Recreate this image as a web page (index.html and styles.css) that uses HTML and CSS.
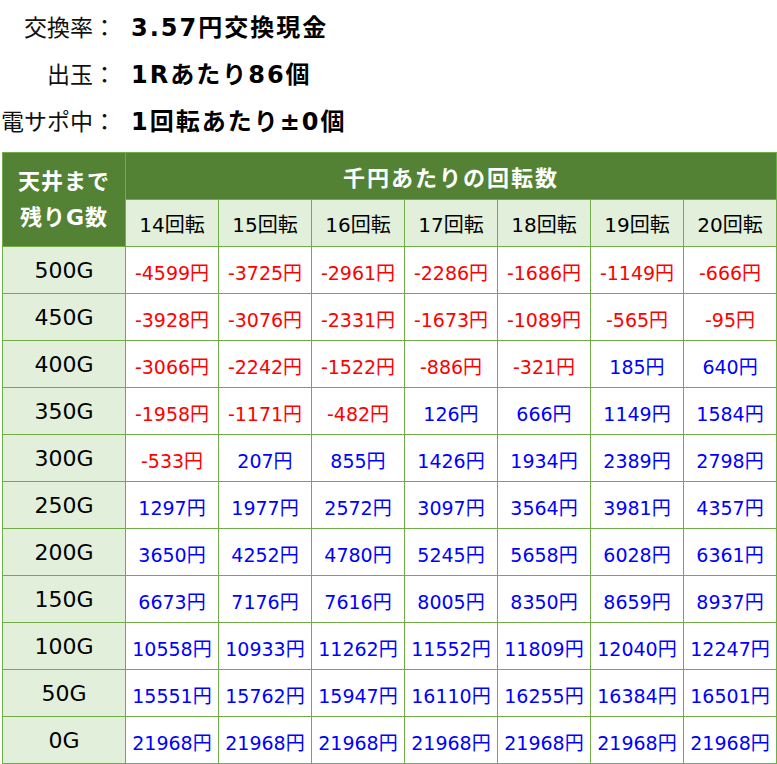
FILE: index.html
```html
<!DOCTYPE html>
<html lang="ja">
<head>
<meta charset="utf-8">
<title>天井まで残りG数</title>
<link rel="stylesheet" href="styles.css">
</head>
<body>
<div class="info">
  <div class="label">交換率：</div><div class="value">3.57円交換現金</div>
  <div class="label">出玉：</div><div class="value">1Rあたり86個</div>
  <div class="label">電サポ中：</div><div class="value">1回転あたり±0個</div>
</div>
<table class="tbl">
  <colgroup>
    <col class="c-first">
    <col class="c-n"><col class="c-n"><col class="c-n"><col class="c-n"><col class="c-n"><col class="c-n"><col class="c-n">
  </colgroup>
  <thead>
    <tr>
      <th class="head-dark corner" rowspan="2">天井まで<br>残りG数</th>
      <th class="head-dark group" colspan="7">千円あたりの回転数</th>
    </tr>
    <tr>
      <th class="head-light">14回転</th>
      <th class="head-light">15回転</th>
      <th class="head-light">16回転</th>
      <th class="head-light">17回転</th>
      <th class="head-light">18回転</th>
      <th class="head-light">19回転</th>
      <th class="head-light">20回転</th>
    </tr>
  </thead>
  <tbody>
    <tr><th class="rowh">500G</th><td class="neg">-4599円</td><td class="neg">-3725円</td><td class="neg">-2961円</td><td class="neg">-2286円</td><td class="neg">-1686円</td><td class="neg">-1149円</td><td class="neg">-666円</td></tr>
    <tr><th class="rowh">450G</th><td class="neg">-3928円</td><td class="neg">-3076円</td><td class="neg">-2331円</td><td class="neg">-1673円</td><td class="neg">-1089円</td><td class="neg">-565円</td><td class="neg">-95円</td></tr>
    <tr><th class="rowh">400G</th><td class="neg">-3066円</td><td class="neg">-2242円</td><td class="neg">-1522円</td><td class="neg">-886円</td><td class="neg">-321円</td><td class="pos">185円</td><td class="pos">640円</td></tr>
    <tr><th class="rowh">350G</th><td class="neg">-1958円</td><td class="neg">-1171円</td><td class="neg">-482円</td><td class="pos">126円</td><td class="pos">666円</td><td class="pos">1149円</td><td class="pos">1584円</td></tr>
    <tr><th class="rowh">300G</th><td class="neg">-533円</td><td class="pos">207円</td><td class="pos">855円</td><td class="pos">1426円</td><td class="pos">1934円</td><td class="pos">2389円</td><td class="pos">2798円</td></tr>
    <tr><th class="rowh">250G</th><td class="pos">1297円</td><td class="pos">1977円</td><td class="pos">2572円</td><td class="pos">3097円</td><td class="pos">3564円</td><td class="pos">3981円</td><td class="pos">4357円</td></tr>
    <tr><th class="rowh">200G</th><td class="pos">3650円</td><td class="pos">4252円</td><td class="pos">4780円</td><td class="pos">5245円</td><td class="pos">5658円</td><td class="pos">6028円</td><td class="pos">6361円</td></tr>
    <tr><th class="rowh">150G</th><td class="pos">6673円</td><td class="pos">7176円</td><td class="pos">7616円</td><td class="pos">8005円</td><td class="pos">8350円</td><td class="pos">8659円</td><td class="pos">8937円</td></tr>
    <tr><th class="rowh">100G</th><td class="pos">10558円</td><td class="pos">10933円</td><td class="pos">11262円</td><td class="pos">11552円</td><td class="pos">11809円</td><td class="pos">12040円</td><td class="pos">12247円</td></tr>
    <tr><th class="rowh">50G</th><td class="pos">15551円</td><td class="pos">15762円</td><td class="pos">15947円</td><td class="pos">16110円</td><td class="pos">16255円</td><td class="pos">16384円</td><td class="pos">16501円</td></tr>
    <tr><th class="rowh">0G</th><td class="pos">21968円</td><td class="pos">21968円</td><td class="pos">21968円</td><td class="pos">21968円</td><td class="pos">21968円</td><td class="pos">21968円</td><td class="pos">21968円</td></tr>
  </tbody>
</table>
</body>
</html>
```
FILE: styles.css
```css
html, body {
  margin: 0;
  padding: 0;
  background: #ffffff;
}
body {
  font-family: "DejaVu Sans", "Noto Sans CJK JP", sans-serif;
  color: #000;
}
.info {
  display: grid;
  grid-template-columns: 116px auto;
  grid-auto-rows: 47px;
  column-gap: 15px;
  align-items: center;
  padding-top: 2px;
  margin-bottom: 9px;
}
.label {
  font-size: 23px;
  text-align: right;
  color: #111;
  white-space: nowrap;
}
.value {
  font-size: 24px;
  font-weight: bold;
  letter-spacing: 2px;
  white-space: nowrap;
}
.tbl {
  margin-left: 2px;
  border-collapse: collapse;
  table-layout: fixed;
  width: 775px;
}
.c-first { width: 123px; }
.c-n { width: 93px; }
.tbl th, .tbl td {
  border: 1px solid #70ad47;
  padding: 0;
  text-align: center;
  white-space: nowrap;
}
.tbl tr { height: 47px; }
.head-dark {
  background: #548235;
  color: #fff;
  font-weight: bold;
  font-size: 22px;
  letter-spacing: 1px;
}
.corner {
  line-height: 36px;
  padding-bottom: 4px;
}
.group {
  letter-spacing: 2px;
  padding-bottom: 6px;
}
.head-light {
  background: #e2efda;
  font-weight: normal;
  font-size: 20px;
}
.rowh {
  background: #e2efda;
  font-weight: normal;
  font-size: 22px;
  padding-bottom: 6px;
}
.tbl td {
  font-size: 19px;
  padding-top: 3px;
}
.neg { color: #ff0000; }
.pos { color: #0000ff; }
```
